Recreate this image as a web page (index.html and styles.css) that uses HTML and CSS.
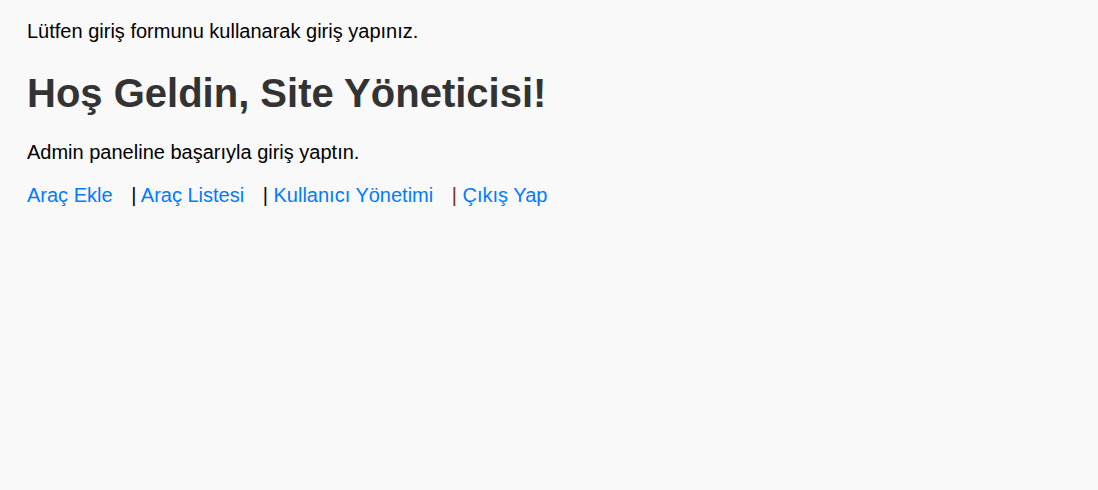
FILE: index.html
```html
<!DOCTYPE html>
<html lang="tr">
<head>
<meta charset="utf-8">
<link rel="stylesheet" href="styles.css">
</head>
<body>
<p class="intro">Lütfen giriş formunu kullanarak giriş yapınız.</p>
<h1 class="title">Hoş Geldin, Site Yöneticisi!</h1>
<p class="lead">Admin paneline başarıyla giriş yaptın.</p>
<nav class="nav"><a href="#">Araç Ekle</a> | <a href="#">Araç Listesi</a> | <a href="#">Kullanıcı Yönetimi</a> <span class="sep-last">|</span> <a href="#">Çıkış Yap</a></nav>
</body>
</html>
```
FILE: styles.css
```css
html, body {
  margin: 0;
  background: #f9f9f9;
}
body {
  padding: 19px 27px;
  font-family: "Liberation Sans", Arial, sans-serif;
  font-size: 20px;
  color: #000;
}
.intro {
  margin: 0;
  line-height: 24px;
}
.title {
  margin: 26px 0 0;
  font-size: 40px;
  color: #333;
  line-height: 48px;
}
.lead {
  margin: 23px 0 0;
  line-height: 24px;
}
.nav {
  margin-top: 19px;
  line-height: 24px;
}
.nav a {
  color: #007bff;
  text-decoration: none;
  margin-right: 13px;
}
.sep-last {
  color: #7f3010;
}
```
